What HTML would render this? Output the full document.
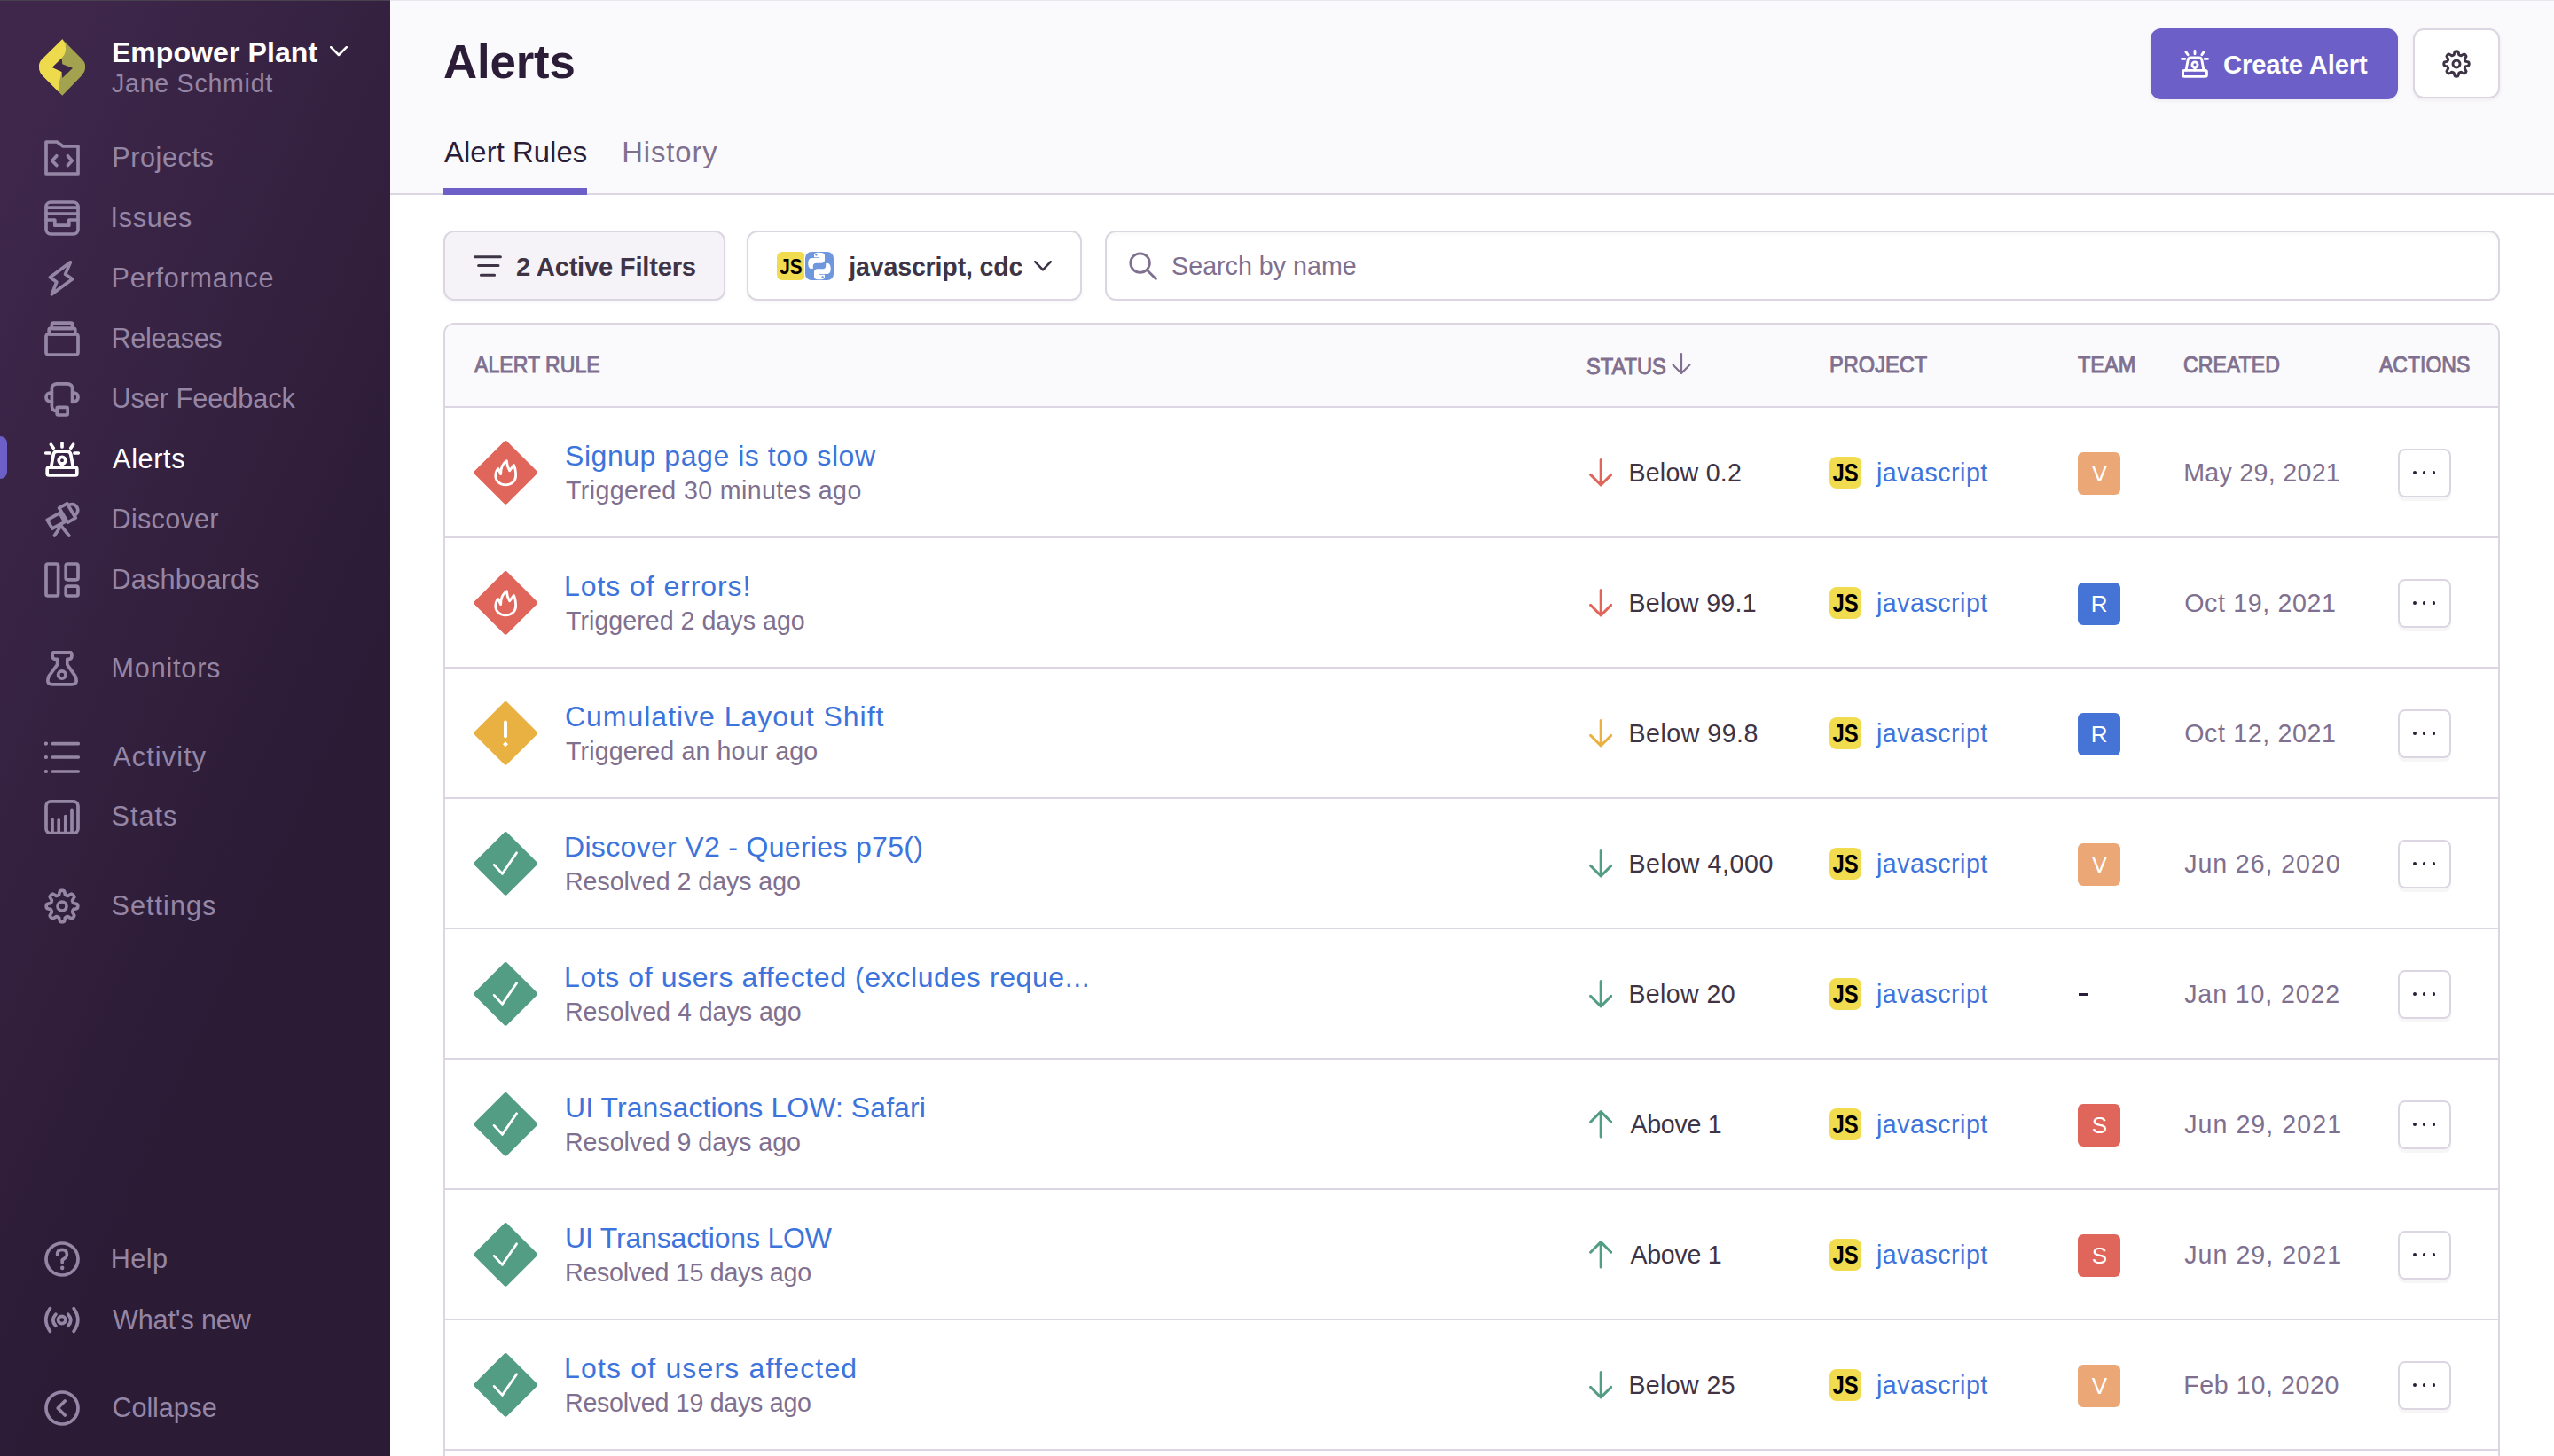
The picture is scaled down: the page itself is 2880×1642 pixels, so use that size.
<!DOCTYPE html>
<html><head><meta charset="utf-8">
<style>
*{box-sizing:border-box;margin:0;padding:0}
html,body{width:1440px;height:821px;overflow:hidden;background:#fff}
@media (min-width:1800px){html{zoom:2}}
body{font-family:"Liberation Sans",sans-serif;position:relative}
.a{position:absolute}
.t{position:absolute;white-space:nowrap}
#sb{position:absolute;left:0;top:0;width:220px;height:821px;background:linear-gradient(294.17deg,#2b1b35 35.57%,#3e274b 92.42%,#3e274b 92.42%)}
.nic{fill:none;stroke-width:1.85;stroke-linecap:round;stroke-linejoin:round}
</style></head><body>
<div id="sb"></div>
<svg class="a" style="left:22px;top:22px" width="26.2" height="32" viewBox="0 0 26.2 32">
<path d="M13.14 0.11 L1.7 11.39 Q0 13.2 0 15.4 Q0 18.6 1.7 20.35 L13.14 31.94 L24.27 20.35 Q26.13 18.3 26.13 15.72 Q26.13 13.2 24.27 11.39 Z" fill="#a3a24e"/>
<path d="M13.14 0.11 L1.7 11.39 Q0 13.2 0 15.4 Q0 18.6 1.7 20.35 L13.14 31.94 L11.29 29.94 L11.13 25.92 L11.6 23.75 L12.83 18.5 L7.42 16.02 L12.83 10.77 L14.38 8.6 L15.06 6.13 L14.84 3.04 Z" fill="#eedb4d"/>
<path d="M12.83 10.77 L7.42 16.02 L12.83 18.5 L13.14 22.05 L19.02 16.33 L13.14 14.17 Z" fill="#3d2548"/>
</svg>
<svg class="a" style="left:186px;top:26.2px" width="10" height="5.8" viewBox="0 0 10 5.8"><path d="M0.6 0.6 L5 5 L9.4 0.6" fill="none" stroke="#fff" stroke-width="1.3" stroke-linecap="round" stroke-linejoin="round"/></svg>
<svg class="a nic" style="left:25px;top:79.00px;stroke:#9586a5" width="20" height="20" viewBox="0 0 20 20"><path d="M1 1 H7.1 L10.6 3.5 H19 V19 H1 Z"/><path d="M6.9 8.9 L4.4 11.6 L6.9 14.3 M13.2 8.9 L15.6 11.6 L13.2 14.3"/></svg>
<svg class="a nic" style="left:25px;top:113.00px;stroke:#9586a5" width="20" height="20" viewBox="0 0 20 20"><rect x="1" y="1" width="18" height="18" rx="2.6"/><path d="M1 4.1 H19 M1 7.5 H19 M1 11 H5.9 V14.1 H13.9 V11 H19"/></svg>
<svg class="a nic" style="left:25px;top:147.00px;stroke:#9586a5" width="20" height="20" viewBox="0 0 20 20"><path d="M14.7 0.9 L3.2 9.4 L6.9 12 L4.2 18.9 L15.8 10.4 L11.8 7.6 Z"/></svg>
<svg class="a nic" style="left:25px;top:181.00px;stroke:#9586a5" width="20" height="20" viewBox="0 0 20 20"><rect x="1" y="7.4" width="18" height="11.6" rx="1.2"/><rect x="2.6" y="4.2" width="14.8" height="3.2" rx="0.8"/><rect x="4.2" y="1.1" width="11.6" height="3.1" rx="0.8"/></svg>
<svg class="a nic" style="left:25px;top:215.25px;stroke:#9586a5" width="20" height="20" viewBox="0 0 20 20"><path d="M4.2 11 V4 Q4.2 0.9 7.3 0.9 H12.7 Q15.8 0.9 15.8 4 V11.2"/><path d="M4.2 5.9 Q1 5.9 1 8.45 Q1 11 4.2 11 M15.8 5.9 Q19 5.9 19 8.45 Q19 11 15.8 11"/><path d="M4.2 11 V13.4 Q4.2 16.3 7.1 16.3"/><rect x="7.1" y="14.2" width="6" height="4.3" rx="0.6"/></svg>
<svg class="a nic" style="left:25px;top:249.05px;stroke:#fff" width="20" height="20" viewBox="0 0 20 20"><path d="M10 0.9 V3 M3.7 1.6 L5.1 3.6 M16.3 1.6 L14.9 3.6 M0.9 6.5 H3 M17 6.5 H19.1"/><path d="M3.8 14.4 L5.1 7.3 Q5.4 5.6 7.2 5.6 H12.8 Q14.6 5.6 14.9 7.3 L16.2 14.4"/><circle cx="10" cy="10.6" r="1.9"/><path d="M10 12.5 V14.4"/><rect x="1.6" y="14.6" width="16.8" height="4.4" rx="1"/></svg>
<svg class="a nic" style="left:25px;top:283.05px;stroke:#9586a5" width="20" height="20" viewBox="0 0 20 20"><path d="M1.6 10.2 L8.6 6.3 L11.5 11.3 L4.5 15 Z"/><path d="M8.3 3.4 L12.8 0.9 L17.6 9 L13.2 11.6 Z"/><path d="M14 1.6 Q17.2 0.6 18.6 3.4 Q19.4 5.6 17.8 7"/><path d="M9.4 13.4 L5.7 19 M9.4 13.4 L13.9 19"/></svg>
<svg class="a nic" style="left:25px;top:317.15px;stroke:#9586a5" width="20" height="20" viewBox="0 0 20 20"><rect x="1" y="1" width="6.8" height="18" rx="1"/><rect x="12.1" y="1" width="6.9" height="8.9" rx="1"/><rect x="12.1" y="13.6" width="6.9" height="5.4" rx="1"/></svg>
<svg class="a nic" style="left:25px;top:367.00px;stroke:#9586a5" width="20" height="20" viewBox="0 0 20 20"><path d="M7.3 7.8 V4.7 H6.2 Q4.5 4.7 4.5 2.4 Q4.5 0.6 6.2 0.6 H13.8 Q15.5 0.6 15.5 2.4 Q15.5 4.7 13.8 4.7 H12.9 V7.8 L17.4 14.2 Q19.4 18.9 15.4 18.9 H4.6 Q0.6 18.9 2.6 14.2 Z"/><circle cx="9.9" cy="13.5" r="2.1"/></svg>
<svg class="a nic" style="left:25px;top:416.85px;stroke:#9586a5" width="20" height="20" viewBox="0 0 20 20"><path d="M4.6 2.3 H19.1 M4.6 10 H19.1 M4.6 18 H19.1"/><path d="M0.9 2.3 H1 M0.9 10 H1 M0.9 18 H1" stroke-width="2.1"/></svg>
<svg class="a nic" style="left:25px;top:450.70px;stroke:#9586a5" width="20" height="20" viewBox="0 0 20 20"><rect x="1" y="1.4" width="18" height="17.9" rx="2.6"/><path d="M4.5 19.3 V11.6 M8.1 19.3 V11.9 M11.9 19.3 V9.8 M15.5 19.3 V6.2"/></svg>
<svg class="a nic" style="left:25px;top:500.90px;stroke:#9586a5" width="20" height="20" viewBox="0 0 20 20"><circle cx="10" cy="10" r="2.5"/><path d="M10.0 1.1 10.6 1.2 11.1 1.4 11.5 2.4 11.7 3.5 12.1 3.8 12.5 4.0 12.9 4.1 13.3 4.2 14.3 3.6 15.3 3.1 15.8 3.3 16.3 3.7 16.7 4.2 16.9 4.7 16.4 5.7 15.8 6.7 15.9 7.1 16.0 7.5 16.2 7.9 16.5 8.3 17.6 8.5 18.6 8.9 18.8 9.4 18.9 10.0 18.8 10.6 18.6 11.1 17.6 11.5 16.5 11.7 16.2 12.1 16.0 12.5 15.9 12.9 15.8 13.3 16.4 14.3 16.9 15.3 16.7 15.8 16.3 16.3 15.8 16.7 15.3 16.9 14.3 16.4 13.3 15.8 12.9 15.9 12.5 16.0 12.1 16.2 11.7 16.5 11.5 17.6 11.1 18.6 10.6 18.8 10.0 18.9 9.4 18.8 8.9 18.6 8.5 17.6 8.3 16.5 7.9 16.2 7.5 16.0 7.1 15.9 6.7 15.8 5.7 16.4 4.7 16.9 4.2 16.7 3.7 16.3 3.3 15.8 3.1 15.3 3.6 14.3 4.2 13.3 4.1 12.9 4.0 12.5 3.8 12.1 3.5 11.7 2.4 11.5 1.4 11.1 1.2 10.6 1.1 10.0 1.2 9.4 1.4 8.9 2.4 8.5 3.5 8.3 3.8 7.9 4.0 7.5 4.1 7.1 4.2 6.7 3.6 5.7 3.1 4.7 3.3 4.2 3.7 3.7 4.2 3.3 4.7 3.1 5.7 3.6 6.7 4.2 7.1 4.1 7.5 4.0 7.9 3.8 8.3 3.5 8.5 2.4 8.9 1.4 9.4 1.2Z"/></svg>
<svg class="a nic" style="left:25px;top:700.10px;stroke:#9586a5" width="20" height="20" viewBox="0 0 20 20"><circle cx="10" cy="10" r="9"/><path d="M7.3 7.5 Q7.3 4.7 10 4.7 Q12.7 4.7 12.7 7.3 Q12.7 9.1 10.1 10.5 V11.9"/><path d="M10.1 14.9 V15" stroke-width="2.2"/></svg>
<svg class="a nic" style="left:25px;top:734.30px;stroke:#9586a5" width="20" height="20" viewBox="0 0 20 20"><circle cx="9.86" cy="9.75" r="2.1"/><path d="M6.4 6.6 Q3.4 9.85 6.4 13.1 M13.4 6.6 Q16.4 9.85 13.4 13.1 M3.2 3.3 Q-1.4 9.75 3.2 16.2 M16.6 3.3 Q21.2 9.75 16.6 16.2"/></svg>
<svg class="a nic" style="left:25px;top:784.15px;stroke:#9586a5" width="20" height="20" viewBox="0 0 20 20"><circle cx="10" cy="10" r="9"/><path d="M11.6 6 L7.6 10 L11.6 14"/></svg>
<div class="a" style="left:0;top:246px;width:4px;height:24px;background:#6c5fc7;border-radius:0 4px 4px 0"></div>
<div class="a" style="left:220px;top:0;width:1220px;height:110px;background:#faf9fb;border-bottom:1px solid #dbd6e1"></div>
<div class="a" style="left:250px;top:106px;width:81px;height:4px;background:#6c5fc7"></div>
<div class="a" style="left:1212.6px;top:16px;width:139.4px;height:40px;background:#6c5fc7;border-radius:6px;box-shadow:0 1px 2px rgba(43,34,51,0.06)"></div>
<svg class="a nic" style="left:1229.5px;top:28px;stroke:#fff;stroke-width:1.8" width="16" height="16" viewBox="0 0 20 20"><path d="M10 0.9 V3 M3.7 1.6 L5.1 3.6 M16.3 1.6 L14.9 3.6 M0.9 6.5 H3 M17 6.5 H19.1"/><path d="M3.8 14.4 L5.1 7.3 Q5.4 5.6 7.2 5.6 H12.8 Q14.6 5.6 14.9 7.3 L16.2 14.4"/><circle cx="10" cy="10.6" r="1.9"/><path d="M10 12.5 V14.4"/><rect x="1.6" y="14.6" width="16.8" height="4.4" rx="1"/></svg>
<div class="a" style="left:1360.3px;top:16.2px;width:49.2px;height:39.5px;background:#fff;border:1px solid #dbd6e1;border-radius:6px;box-shadow:0 1px 2px rgba(43,34,51,0.06)"></div>
<svg class="a nic" style="left:1377px;top:28px;stroke:#3e3446;stroke-width:1.85" width="16" height="16" viewBox="0 0 20 20"><circle cx="10" cy="10" r="2.5"/><path d="M10.0 1.1 10.6 1.2 11.1 1.4 11.5 2.4 11.7 3.5 12.1 3.8 12.5 4.0 12.9 4.1 13.3 4.2 14.3 3.6 15.3 3.1 15.8 3.3 16.3 3.7 16.7 4.2 16.9 4.7 16.4 5.7 15.8 6.7 15.9 7.1 16.0 7.5 16.2 7.9 16.5 8.3 17.6 8.5 18.6 8.9 18.8 9.4 18.9 10.0 18.8 10.6 18.6 11.1 17.6 11.5 16.5 11.7 16.2 12.1 16.0 12.5 15.9 12.9 15.8 13.3 16.4 14.3 16.9 15.3 16.7 15.8 16.3 16.3 15.8 16.7 15.3 16.9 14.3 16.4 13.3 15.8 12.9 15.9 12.5 16.0 12.1 16.2 11.7 16.5 11.5 17.6 11.1 18.6 10.6 18.8 10.0 18.9 9.4 18.8 8.9 18.6 8.5 17.6 8.3 16.5 7.9 16.2 7.5 16.0 7.1 15.9 6.7 15.8 5.7 16.4 4.7 16.9 4.2 16.7 3.7 16.3 3.3 15.8 3.1 15.3 3.6 14.3 4.2 13.3 4.1 12.9 4.0 12.5 3.8 12.1 3.5 11.7 2.4 11.5 1.4 11.1 1.2 10.6 1.1 10.0 1.2 9.4 1.4 8.9 2.4 8.5 3.5 8.3 3.8 7.9 4.0 7.5 4.1 7.1 4.2 6.7 3.6 5.7 3.1 4.7 3.3 4.2 3.7 3.7 4.2 3.3 4.7 3.1 5.7 3.6 6.7 4.2 7.1 4.1 7.5 4.0 7.9 3.8 8.3 3.5 8.5 2.4 8.9 1.4 9.4 1.2Z"/></svg>
<div class="a" style="left:250px;top:130px;width:159px;height:39.6px;background:#f5f3f7;border:1px solid #dbd6e1;border-radius:6px;box-shadow:0 1px 2px rgba(43,34,51,0.04)"></div>
<svg class="a" style="left:267px;top:143px" width="16" height="14" viewBox="0 0 16 14" fill="none" stroke="#3e3446" stroke-width="1.5" stroke-linecap="round"><path d="M0.8 1.9 H15.2 M2.8 6.8 H14 M4.2 12.1 H11.8"/></svg>
<div class="a" style="left:421.2px;top:130px;width:188.7px;height:39.6px;background:#fff;border:1px solid #dbd6e1;border-radius:6px;box-shadow:0 1px 2px rgba(43,34,51,0.04)"></div>
<div class="a" style="left:438px;top:142px;width:16px;height:16px;background:#f0dc4e;border-radius:3px"></div>
<svg class="a" style="left:438px;top:142px" width="16" height="16" viewBox="0 0 16 16"><text x="1.65" y="12.35" font-family="Liberation Sans" font-weight="700" font-size="11.8" textLength="12.7" lengthAdjust="spacingAndGlyphs" fill="#000">JS</text></svg>
<div class="a" style="left:454px;top:142px;width:16px;height:16px;background:#6f97dd;border-radius:3.5px;box-shadow:0 0 0 0.6px #fff"></div>
<svg class="a" style="left:454px;top:142px" width="16" height="16" viewBox="0 0 16 16" fill="#fff" fill-rule="evenodd"><g transform="translate(8 8) scale(1.2) translate(-8 -8)"><path d="M7.9 1.6 C5.3 1.6 5.5 2.7 5.5 2.7 V3.9 H8 V4.3 H4.4 C4.4 4.3 2.7 4.1 2.7 6.8 C2.7 9.4 4.2 9.3 4.2 9.3 H5 V8.1 C5 8.1 4.9 6.6 6.5 6.6 H9 C9 6.6 10.5 6.6 10.5 5.1 V2.9 C10.5 2.9 10.7 1.6 7.9 1.6 Z M6.5 2.3 C6.8 2.3 7 2.5 7 2.8 C7 3.1 6.8 3.3 6.5 3.3 C6.2 3.3 6 3.1 6 2.8 C6 2.5 6.2 2.3 6.5 2.3 Z"/><path d="M8.1 14.4 C10.7 14.4 10.5 13.3 10.5 13.3 V12.1 H8 V11.7 H11.6 C11.6 11.7 13.3 11.9 13.3 9.2 C13.3 6.6 11.8 6.7 11.8 6.7 H11 V7.9 C11 7.9 11.1 9.4 9.5 9.4 H7 C7 9.4 5.5 9.4 5.5 10.9 V13.1 C5.5 13.1 5.3 14.4 8.1 14.4 Z M9.5 13.7 C9.2 13.7 9 13.5 9 13.2 C9 12.9 9.2 12.7 9.5 12.7 C9.8 12.7 10 12.9 10 13.2 C10 13.5 9.8 13.7 9.5 13.7 Z"/></g></svg>
<svg class="a" style="left:582.8px;top:147px" width="10" height="6" viewBox="0 0 10 6"><path d="M0.6 0.6 L5 5.2 L9.4 0.6" fill="none" stroke="#3e3446" stroke-width="1.3" stroke-linecap="round" stroke-linejoin="round"/></svg>
<div class="a" style="left:622.8px;top:130px;width:786.7px;height:39.6px;background:#fff;border:1px solid #dbd6e1;border-radius:6px;box-shadow:inset 0 1px 2px rgba(43,34,51,0.03)"></div>
<svg class="a" style="left:636.5px;top:142px" width="16" height="16" viewBox="0 0 16 16" fill="none" stroke="#80708f" stroke-width="1.4" stroke-linecap="round"><circle cx="6.3" cy="6.3" r="5.4"/><path d="M10.2 10.2 L15.2 15.2"/></svg>
<div class="a" style="left:250px;top:182px;width:1159.5px;height:700px;background:#fff;border:1px solid #dbd6e1;border-radius:6px"></div>
<div class="a" style="left:251px;top:183px;width:1157.5px;height:46px;background:#faf9fb;border-radius:5px 5px 0 0"></div>
<div class="a" style="left:251px;top:229.0px;width:1157.5px;height:1px;background:#dbd6e1"></div>
<div class="a" style="left:251px;top:302.5px;width:1157.5px;height:1px;background:#dbd6e1"></div>
<div class="a" style="left:251px;top:376.0px;width:1157.5px;height:1px;background:#dbd6e1"></div>
<div class="a" style="left:251px;top:449.5px;width:1157.5px;height:1px;background:#dbd6e1"></div>
<div class="a" style="left:251px;top:523.0px;width:1157.5px;height:1px;background:#dbd6e1"></div>
<div class="a" style="left:251px;top:596.5px;width:1157.5px;height:1px;background:#dbd6e1"></div>
<div class="a" style="left:251px;top:670.0px;width:1157.5px;height:1px;background:#dbd6e1"></div>
<div class="a" style="left:251px;top:743.5px;width:1157.5px;height:1px;background:#dbd6e1"></div>
<div class="a" style="left:251px;top:817.0px;width:1157.5px;height:1px;background:#dbd6e1"></div>
<svg class="a" style="left:942.5px;top:199px" width="11" height="12.2" viewBox="0 0 11 12.2" fill="none" stroke="#80708f" stroke-width="1.1" stroke-linecap="round" stroke-linejoin="round"><path d="M5.5 0.6 V11.4 M0.8 6.8 L5.5 11.5 L10.2 6.8"/></svg>
<div class="a" style="left:271.9px;top:253.4px;width:26.2px;height:26.2px;background:#e0655a;border-radius:1.3px;transform:rotate(45deg)"></div>
<svg class="a" style="left:277px;top:256.5px" width="16" height="20" viewBox="-8 -10 16 20" fill="none" stroke="#fff" stroke-width="1.4" stroke-linejoin="round" stroke-linecap="round"><path d="M0.1 6.9 C-3.5 6.9 -5.6 4.6 -5.6 1.8 C-5.6 -0.2 -4.8 -1.6 -4.1 -2.3 L-2.7 0.8 C-2.6 -2.8 -1.5 -5.4 0.7 -6.7 C0.8 -4.3 1.3 -2.8 2.3 -1.1 L4.7 -4.3 C5.4 -2.9 5.8 -1.0 5.8 1.6 C5.8 4.6 3.6 6.9 0.1 6.9 Z"/></svg>
<svg class="a" style="left:895.9px;top:258.7px" width="13.2" height="15.8" viewBox="0 0 13.2 15.8" fill="none" stroke="#e0655a" stroke-width="1.5" stroke-linecap="round" stroke-linejoin="round"><path d="M6.6 0.8 V15 M0.8 9.2 L6.6 15 L12.4 9.2"/></svg>
<div class="a" style="left:1031.5px;top:257.5px;width:18px;height:18px;background:#f0dc4e;border-radius:4px"></div>
<svg class="a" style="left:1031.5px;top:257.5px" width="18" height="18" viewBox="0 0 18 18"><text x="1.75" y="13.9" font-family="Liberation Sans" font-weight="700" font-size="14.8" textLength="14.6" lengthAdjust="spacingAndGlyphs" fill="#000">JS</text></svg>
<div class="a" style="left:1171.5px;top:255.0px;width:24px;height:24px;background:#eba776;border-radius:3px"></div>
<div class="a" style="left:1352px;top:252.8px;width:30px;height:27.6px;background:#fff;border:1px solid #dbd6e1;border-radius:4px;box-shadow:0 2px 0 rgba(43,34,51,0.04)"></div>
<div class="a" style="left:1360.4px;top:265.7px;width:1.9px;height:1.9px;background:#2b1d38;border-radius:1px"></div>
<div class="a" style="left:1365.8500000000001px;top:265.7px;width:1.9px;height:1.9px;background:#2b1d38;border-radius:1px"></div>
<div class="a" style="left:1371.3000000000002px;top:265.7px;width:1.9px;height:1.9px;background:#2b1d38;border-radius:1px"></div>
<div class="a" style="left:271.9px;top:326.9px;width:26.2px;height:26.2px;background:#e0655a;border-radius:1.3px;transform:rotate(45deg)"></div>
<svg class="a" style="left:277px;top:330.0px" width="16" height="20" viewBox="-8 -10 16 20" fill="none" stroke="#fff" stroke-width="1.4" stroke-linejoin="round" stroke-linecap="round"><path d="M0.1 6.9 C-3.5 6.9 -5.6 4.6 -5.6 1.8 C-5.6 -0.2 -4.8 -1.6 -4.1 -2.3 L-2.7 0.8 C-2.6 -2.8 -1.5 -5.4 0.7 -6.7 C0.8 -4.3 1.3 -2.8 2.3 -1.1 L4.7 -4.3 C5.4 -2.9 5.8 -1.0 5.8 1.6 C5.8 4.6 3.6 6.9 0.1 6.9 Z"/></svg>
<svg class="a" style="left:895.9px;top:332.2px" width="13.2" height="15.8" viewBox="0 0 13.2 15.8" fill="none" stroke="#e0655a" stroke-width="1.5" stroke-linecap="round" stroke-linejoin="round"><path d="M6.6 0.8 V15 M0.8 9.2 L6.6 15 L12.4 9.2"/></svg>
<div class="a" style="left:1031.5px;top:331.0px;width:18px;height:18px;background:#f0dc4e;border-radius:4px"></div>
<svg class="a" style="left:1031.5px;top:331.0px" width="18" height="18" viewBox="0 0 18 18"><text x="1.75" y="13.9" font-family="Liberation Sans" font-weight="700" font-size="14.8" textLength="14.6" lengthAdjust="spacingAndGlyphs" fill="#000">JS</text></svg>
<div class="a" style="left:1171.5px;top:328.5px;width:24px;height:24px;background:#4674d6;border-radius:3px"></div>
<div class="a" style="left:1352px;top:326.3px;width:30px;height:27.6px;background:#fff;border:1px solid #dbd6e1;border-radius:4px;box-shadow:0 2px 0 rgba(43,34,51,0.04)"></div>
<div class="a" style="left:1360.4px;top:339.2px;width:1.9px;height:1.9px;background:#2b1d38;border-radius:1px"></div>
<div class="a" style="left:1365.8500000000001px;top:339.2px;width:1.9px;height:1.9px;background:#2b1d38;border-radius:1px"></div>
<div class="a" style="left:1371.3000000000002px;top:339.2px;width:1.9px;height:1.9px;background:#2b1d38;border-radius:1px"></div>
<div class="a" style="left:271.9px;top:400.4px;width:26.2px;height:26.2px;background:#e9b141;border-radius:1.3px;transform:rotate(45deg)"></div>
<svg class="a" style="left:277px;top:403.5px" width="16" height="20" viewBox="-8 -10 16 20" fill="#fff"><rect x="-1" y="-7.3" width="2" height="9.9" rx="1"/><rect x="-1.05" y="5.1" width="2.1" height="2.1" transform="rotate(45 0 6.15)"/></svg>
<svg class="a" style="left:895.9px;top:405.7px" width="13.2" height="15.8" viewBox="0 0 13.2 15.8" fill="none" stroke="#e9b141" stroke-width="1.5" stroke-linecap="round" stroke-linejoin="round"><path d="M6.6 0.8 V15 M0.8 9.2 L6.6 15 L12.4 9.2"/></svg>
<div class="a" style="left:1031.5px;top:404.5px;width:18px;height:18px;background:#f0dc4e;border-radius:4px"></div>
<svg class="a" style="left:1031.5px;top:404.5px" width="18" height="18" viewBox="0 0 18 18"><text x="1.75" y="13.9" font-family="Liberation Sans" font-weight="700" font-size="14.8" textLength="14.6" lengthAdjust="spacingAndGlyphs" fill="#000">JS</text></svg>
<div class="a" style="left:1171.5px;top:402.0px;width:24px;height:24px;background:#4674d6;border-radius:3px"></div>
<div class="a" style="left:1352px;top:399.8px;width:30px;height:27.6px;background:#fff;border:1px solid #dbd6e1;border-radius:4px;box-shadow:0 2px 0 rgba(43,34,51,0.04)"></div>
<div class="a" style="left:1360.4px;top:412.7px;width:1.9px;height:1.9px;background:#2b1d38;border-radius:1px"></div>
<div class="a" style="left:1365.8500000000001px;top:412.7px;width:1.9px;height:1.9px;background:#2b1d38;border-radius:1px"></div>
<div class="a" style="left:1371.3000000000002px;top:412.7px;width:1.9px;height:1.9px;background:#2b1d38;border-radius:1px"></div>
<div class="a" style="left:271.9px;top:473.9px;width:26.2px;height:26.2px;background:#529d83;border-radius:1.3px;transform:rotate(45deg)"></div>
<svg class="a" style="left:277px;top:477.0px" width="16" height="20" viewBox="-8 -10 16 20" fill="none" stroke="#fff" stroke-width="1.4" stroke-linecap="round" stroke-linejoin="round"><path d="M-6.4 0.7 L-1.8 5.7 L6.3 -6.1"/></svg>
<svg class="a" style="left:895.9px;top:479.2px" width="13.2" height="15.8" viewBox="0 0 13.2 15.8" fill="none" stroke="#529d83" stroke-width="1.5" stroke-linecap="round" stroke-linejoin="round"><path d="M6.6 0.8 V15 M0.8 9.2 L6.6 15 L12.4 9.2"/></svg>
<div class="a" style="left:1031.5px;top:478.0px;width:18px;height:18px;background:#f0dc4e;border-radius:4px"></div>
<svg class="a" style="left:1031.5px;top:478.0px" width="18" height="18" viewBox="0 0 18 18"><text x="1.75" y="13.9" font-family="Liberation Sans" font-weight="700" font-size="14.8" textLength="14.6" lengthAdjust="spacingAndGlyphs" fill="#000">JS</text></svg>
<div class="a" style="left:1171.5px;top:475.5px;width:24px;height:24px;background:#eba776;border-radius:3px"></div>
<div class="a" style="left:1352px;top:473.3px;width:30px;height:27.6px;background:#fff;border:1px solid #dbd6e1;border-radius:4px;box-shadow:0 2px 0 rgba(43,34,51,0.04)"></div>
<div class="a" style="left:1360.4px;top:486.2px;width:1.9px;height:1.9px;background:#2b1d38;border-radius:1px"></div>
<div class="a" style="left:1365.8500000000001px;top:486.2px;width:1.9px;height:1.9px;background:#2b1d38;border-radius:1px"></div>
<div class="a" style="left:1371.3000000000002px;top:486.2px;width:1.9px;height:1.9px;background:#2b1d38;border-radius:1px"></div>
<div class="a" style="left:271.9px;top:547.4px;width:26.2px;height:26.2px;background:#529d83;border-radius:1.3px;transform:rotate(45deg)"></div>
<svg class="a" style="left:277px;top:550.5px" width="16" height="20" viewBox="-8 -10 16 20" fill="none" stroke="#fff" stroke-width="1.4" stroke-linecap="round" stroke-linejoin="round"><path d="M-6.4 0.7 L-1.8 5.7 L6.3 -6.1"/></svg>
<svg class="a" style="left:895.9px;top:552.7px" width="13.2" height="15.8" viewBox="0 0 13.2 15.8" fill="none" stroke="#529d83" stroke-width="1.5" stroke-linecap="round" stroke-linejoin="round"><path d="M6.6 0.8 V15 M0.8 9.2 L6.6 15 L12.4 9.2"/></svg>
<div class="a" style="left:1031.5px;top:551.5px;width:18px;height:18px;background:#f0dc4e;border-radius:4px"></div>
<svg class="a" style="left:1031.5px;top:551.5px" width="18" height="18" viewBox="0 0 18 18"><text x="1.75" y="13.9" font-family="Liberation Sans" font-weight="700" font-size="14.8" textLength="14.6" lengthAdjust="spacingAndGlyphs" fill="#000">JS</text></svg>
<div class="a" style="left:1172px;top:559.9px;width:5px;height:1.4px;background:#2b1d38"></div>
<div class="a" style="left:1352px;top:546.8px;width:30px;height:27.6px;background:#fff;border:1px solid #dbd6e1;border-radius:4px;box-shadow:0 2px 0 rgba(43,34,51,0.04)"></div>
<div class="a" style="left:1360.4px;top:559.7px;width:1.9px;height:1.9px;background:#2b1d38;border-radius:1px"></div>
<div class="a" style="left:1365.8500000000001px;top:559.7px;width:1.9px;height:1.9px;background:#2b1d38;border-radius:1px"></div>
<div class="a" style="left:1371.3000000000002px;top:559.7px;width:1.9px;height:1.9px;background:#2b1d38;border-radius:1px"></div>
<div class="a" style="left:271.9px;top:620.9px;width:26.2px;height:26.2px;background:#529d83;border-radius:1.3px;transform:rotate(45deg)"></div>
<svg class="a" style="left:277px;top:624.0px" width="16" height="20" viewBox="-8 -10 16 20" fill="none" stroke="#fff" stroke-width="1.4" stroke-linecap="round" stroke-linejoin="round"><path d="M-6.4 0.7 L-1.8 5.7 L6.3 -6.1"/></svg>
<svg class="a" style="left:895.9px;top:626.2px" width="13.2" height="15.8" viewBox="0 0 13.2 15.8" fill="none" stroke="#529d83" stroke-width="1.5" stroke-linecap="round" stroke-linejoin="round"><path d="M6.6 15 V0.8 M0.8 6.6 L6.6 0.8 L12.4 6.6"/></svg>
<div class="a" style="left:1031.5px;top:625.0px;width:18px;height:18px;background:#f0dc4e;border-radius:4px"></div>
<svg class="a" style="left:1031.5px;top:625.0px" width="18" height="18" viewBox="0 0 18 18"><text x="1.75" y="13.9" font-family="Liberation Sans" font-weight="700" font-size="14.8" textLength="14.6" lengthAdjust="spacingAndGlyphs" fill="#000">JS</text></svg>
<div class="a" style="left:1171.5px;top:622.5px;width:24px;height:24px;background:#e0655a;border-radius:3px"></div>
<div class="a" style="left:1352px;top:620.3px;width:30px;height:27.6px;background:#fff;border:1px solid #dbd6e1;border-radius:4px;box-shadow:0 2px 0 rgba(43,34,51,0.04)"></div>
<div class="a" style="left:1360.4px;top:633.2px;width:1.9px;height:1.9px;background:#2b1d38;border-radius:1px"></div>
<div class="a" style="left:1365.8500000000001px;top:633.2px;width:1.9px;height:1.9px;background:#2b1d38;border-radius:1px"></div>
<div class="a" style="left:1371.3000000000002px;top:633.2px;width:1.9px;height:1.9px;background:#2b1d38;border-radius:1px"></div>
<div class="a" style="left:271.9px;top:694.4px;width:26.2px;height:26.2px;background:#529d83;border-radius:1.3px;transform:rotate(45deg)"></div>
<svg class="a" style="left:277px;top:697.5px" width="16" height="20" viewBox="-8 -10 16 20" fill="none" stroke="#fff" stroke-width="1.4" stroke-linecap="round" stroke-linejoin="round"><path d="M-6.4 0.7 L-1.8 5.7 L6.3 -6.1"/></svg>
<svg class="a" style="left:895.9px;top:699.7px" width="13.2" height="15.8" viewBox="0 0 13.2 15.8" fill="none" stroke="#529d83" stroke-width="1.5" stroke-linecap="round" stroke-linejoin="round"><path d="M6.6 15 V0.8 M0.8 6.6 L6.6 0.8 L12.4 6.6"/></svg>
<div class="a" style="left:1031.5px;top:698.5px;width:18px;height:18px;background:#f0dc4e;border-radius:4px"></div>
<svg class="a" style="left:1031.5px;top:698.5px" width="18" height="18" viewBox="0 0 18 18"><text x="1.75" y="13.9" font-family="Liberation Sans" font-weight="700" font-size="14.8" textLength="14.6" lengthAdjust="spacingAndGlyphs" fill="#000">JS</text></svg>
<div class="a" style="left:1171.5px;top:696.0px;width:24px;height:24px;background:#e0655a;border-radius:3px"></div>
<div class="a" style="left:1352px;top:693.8px;width:30px;height:27.6px;background:#fff;border:1px solid #dbd6e1;border-radius:4px;box-shadow:0 2px 0 rgba(43,34,51,0.04)"></div>
<div class="a" style="left:1360.4px;top:706.7px;width:1.9px;height:1.9px;background:#2b1d38;border-radius:1px"></div>
<div class="a" style="left:1365.8500000000001px;top:706.7px;width:1.9px;height:1.9px;background:#2b1d38;border-radius:1px"></div>
<div class="a" style="left:1371.3000000000002px;top:706.7px;width:1.9px;height:1.9px;background:#2b1d38;border-radius:1px"></div>
<div class="a" style="left:271.9px;top:767.9px;width:26.2px;height:26.2px;background:#529d83;border-radius:1.3px;transform:rotate(45deg)"></div>
<svg class="a" style="left:277px;top:771.0px" width="16" height="20" viewBox="-8 -10 16 20" fill="none" stroke="#fff" stroke-width="1.4" stroke-linecap="round" stroke-linejoin="round"><path d="M-6.4 0.7 L-1.8 5.7 L6.3 -6.1"/></svg>
<svg class="a" style="left:895.9px;top:773.2px" width="13.2" height="15.8" viewBox="0 0 13.2 15.8" fill="none" stroke="#529d83" stroke-width="1.5" stroke-linecap="round" stroke-linejoin="round"><path d="M6.6 0.8 V15 M0.8 9.2 L6.6 15 L12.4 9.2"/></svg>
<div class="a" style="left:1031.5px;top:772.0px;width:18px;height:18px;background:#f0dc4e;border-radius:4px"></div>
<svg class="a" style="left:1031.5px;top:772.0px" width="18" height="18" viewBox="0 0 18 18"><text x="1.75" y="13.9" font-family="Liberation Sans" font-weight="700" font-size="14.8" textLength="14.6" lengthAdjust="spacingAndGlyphs" fill="#000">JS</text></svg>
<div class="a" style="left:1171.5px;top:769.5px;width:24px;height:24px;background:#eba776;border-radius:3px"></div>
<div class="a" style="left:1352px;top:767.3px;width:30px;height:27.6px;background:#fff;border:1px solid #dbd6e1;border-radius:4px;box-shadow:0 2px 0 rgba(43,34,51,0.04)"></div>
<div class="a" style="left:1360.4px;top:780.2px;width:1.9px;height:1.9px;background:#2b1d38;border-radius:1px"></div>
<div class="a" style="left:1365.8500000000001px;top:780.2px;width:1.9px;height:1.9px;background:#2b1d38;border-radius:1px"></div>
<div class="a" style="left:1371.3000000000002px;top:780.2px;width:1.9px;height:1.9px;background:#2b1d38;border-radius:1px"></div>
<div class="a" style="left:0;top:0;width:220px;height:0.5px;background:#48414e"></div>
<div class="a" style="left:220px;top:0;width:1220px;height:0.5px;background:#e9e7ec"></div>
<div class="t" style="left:62.95px;top:21.50px;font-size:16px;line-height:16px;font-weight:700;letter-spacing:0.042px;color:#fff">Empower Plant</div>
<div class="t" style="left:63.00px;top:39.95px;font-size:14.3px;line-height:14.3px;letter-spacing:0.364px;color:#9586a5">Jane Schmidt</div>
<div class="t" style="left:63.15px;top:80.95px;font-size:15.3px;line-height:15.3px;letter-spacing:0.286px;color:#9586a5">Projects</div>
<div class="t" style="left:62.25px;top:114.95px;font-size:15.3px;line-height:15.3px;letter-spacing:0.34px;color:#9586a5">Issues</div>
<div class="t" style="left:62.75px;top:148.94px;font-size:15.3px;line-height:15.3px;letter-spacing:0.39px;color:#9586a5">Performance</div>
<div class="t" style="left:62.75px;top:182.94px;font-size:15.3px;line-height:15.3px;letter-spacing:-0.171px;color:#9586a5">Releases</div>
<div class="t" style="left:62.75px;top:217.19px;font-size:15.3px;line-height:15.3px;letter-spacing:-0.008px;color:#9586a5">User Feedback</div>
<div class="t" style="left:63.55px;top:251.00px;font-size:15.3px;line-height:15.3px;letter-spacing:0.32px;color:#fff">Alerts</div>
<div class="t" style="left:62.75px;top:285.00px;font-size:15.3px;line-height:15.3px;letter-spacing:0.143px;color:#9586a5">Discover</div>
<div class="t" style="left:62.75px;top:319.10px;font-size:15.3px;line-height:15.3px;letter-spacing:0.111px;color:#9586a5">Dashboards</div>
<div class="t" style="left:62.80px;top:368.94px;font-size:15.3px;line-height:15.3px;letter-spacing:0.393px;color:#9586a5">Monitors</div>
<div class="t" style="left:63.60px;top:418.80px;font-size:15.3px;line-height:15.3px;letter-spacing:0.571px;color:#9586a5">Activity</div>
<div class="t" style="left:62.75px;top:452.64px;font-size:15.3px;line-height:15.3px;letter-spacing:0.5px;color:#9586a5">Stats</div>
<div class="t" style="left:62.75px;top:502.85px;font-size:15.3px;line-height:15.3px;letter-spacing:0.521px;color:#9586a5">Settings</div>
<div class="t" style="left:62.40px;top:702.04px;font-size:15.3px;line-height:15.3px;letter-spacing:0.233px;color:#9586a5">Help</div>
<div class="t" style="left:63.50px;top:736.25px;font-size:15.3px;line-height:15.3px;letter-spacing:-0.078px;color:#9586a5">What's new</div>
<div class="t" style="left:63.25px;top:786.10px;font-size:15.3px;line-height:15.3px;letter-spacing:-0.057px;color:#9586a5">Collapse</div>
<div class="t" style="left:250.00px;top:22.01px;font-size:26.4px;line-height:26.4px;font-weight:700;letter-spacing:-0.08px;color:#2b1d38">Alerts</div>
<div class="t" style="left:250.50px;top:78.11px;font-size:16.4px;line-height:16.4px;letter-spacing:0.04px;color:#2b1d38">Alert Rules</div>
<div class="t" style="left:350.65px;top:78.11px;font-size:16.4px;line-height:16.4px;letter-spacing:0.442px;color:#80708f">History</div>
<div class="t" style="left:1253.50px;top:29.34px;font-size:14.6px;line-height:14.6px;font-weight:700;letter-spacing:-0.077px;color:#fff">Create Alert</div>
<div class="t" style="left:291.00px;top:143.34px;font-size:14.6px;line-height:14.6px;font-weight:700;letter-spacing:-0.117px;color:#3e3446">2 Active Filters</div>
<div class="t" style="left:478.60px;top:143.34px;font-size:14.3px;line-height:14.3px;font-weight:700;letter-spacing:-0.086px;color:#3e3446">javascript, cdc</div>
<div class="t" style="left:660.55px;top:142.84px;font-size:14.3px;line-height:14.3px;letter-spacing:0.015px;color:#80708f">Search by name</div>
<div class="t" style="left:267.30px;top:199.68px;font-size:12.5px;line-height:12.5px;-webkit-text-stroke:0.45px #80708f;letter-spacing:0px;transform:scaleX(0.9242);transform-origin:0 0;color:#80708f">ALERT RULE</div>
<div class="t" style="left:894.38px;top:200.38px;font-size:12.5px;line-height:12.5px;-webkit-text-stroke:0.45px #80708f;letter-spacing:0px;transform:scaleX(0.9473);transform-origin:0 0;color:#80708f">STATUS</div>
<div class="t" style="left:1031.28px;top:199.62px;font-size:12.5px;line-height:12.5px;-webkit-text-stroke:0.45px #80708f;letter-spacing:0px;transform:scaleX(0.9448);transform-origin:0 0;color:#80708f">PROJECT</div>
<div class="t" style="left:1171.40px;top:199.62px;font-size:12.5px;line-height:12.5px;-webkit-text-stroke:0.45px #80708f;letter-spacing:0px;transform:scaleX(0.9412);transform-origin:0 0;color:#80708f">TEAM</div>
<div class="t" style="left:1231.04px;top:199.62px;font-size:12.5px;line-height:12.5px;-webkit-text-stroke:0.45px #80708f;letter-spacing:0px;transform:scaleX(0.9259);transform-origin:0 0;color:#80708f">CREATED</div>
<div class="t" style="left:1341.50px;top:199.62px;font-size:12.5px;line-height:12.5px;-webkit-text-stroke:0.45px #80708f;letter-spacing:0px;transform:scaleX(0.9207);transform-origin:0 0;color:#80708f">ACTIONS</div>
<div class="t" style="left:318.50px;top:248.90px;font-size:16px;line-height:16px;letter-spacing:0.273px;color:#3d74db">Signup page is too slow</div>
<div class="t" style="left:319.00px;top:269.35px;font-size:14.3px;line-height:14.3px;letter-spacing:0.185px;color:#80708f">Triggered 30 minutes ago</div>
<div class="t" style="left:918.20px;top:259.25px;font-size:14.3px;line-height:14.3px;letter-spacing:0.125px;color:#3e3446">Below 0.2</div>
<div class="t" style="left:1058.00px;top:259.25px;font-size:14.3px;line-height:14.3px;letter-spacing:0.25px;color:#3d74db">javascript</div>
<div class="t" style="left:1231.10px;top:259.39px;font-size:14.3px;line-height:14.3px;letter-spacing:0.15px;color:#80708f">May 29, 2021</div>
<div class="t" style="left:1179.35px;top:260.50px;font-size:13px;line-height:13px;letter-spacing:0px;color:#fff">V</div>
<div class="t" style="left:318.00px;top:322.40px;font-size:16px;line-height:16px;letter-spacing:0.464px;color:#3d74db">Lots of errors!</div>
<div class="t" style="left:319.00px;top:342.85px;font-size:14.3px;line-height:14.3px;letter-spacing:0.016px;color:#80708f">Triggered 2 days ago</div>
<div class="t" style="left:918.20px;top:332.75px;font-size:14.3px;line-height:14.3px;letter-spacing:0.161px;color:#3e3446">Below 99.1</div>
<div class="t" style="left:1058.00px;top:332.75px;font-size:14.3px;line-height:14.3px;letter-spacing:0.25px;color:#3d74db">javascript</div>
<div class="t" style="left:1231.60px;top:332.89px;font-size:14.3px;line-height:14.3px;letter-spacing:0.318px;color:#80708f">Oct 19, 2021</div>
<div class="t" style="left:1178.85px;top:334.00px;font-size:13px;line-height:13px;letter-spacing:0px;color:#fff">R</div>
<div class="t" style="left:318.50px;top:395.90px;font-size:16px;line-height:16px;letter-spacing:0.489px;color:#3d74db">Cumulative Layout Shift</div>
<div class="t" style="left:319.00px;top:416.35px;font-size:14.3px;line-height:14.3px;letter-spacing:0.058px;color:#80708f">Triggered an hour ago</div>
<div class="t" style="left:918.20px;top:406.25px;font-size:14.3px;line-height:14.3px;letter-spacing:0.256px;color:#3e3446">Below 99.8</div>
<div class="t" style="left:1058.00px;top:406.25px;font-size:14.3px;line-height:14.3px;letter-spacing:0.25px;color:#3d74db">javascript</div>
<div class="t" style="left:1231.60px;top:406.39px;font-size:14.3px;line-height:14.3px;letter-spacing:0.318px;color:#80708f">Oct 12, 2021</div>
<div class="t" style="left:1178.85px;top:407.50px;font-size:13px;line-height:13px;letter-spacing:0px;color:#fff">R</div>
<div class="t" style="left:318.00px;top:469.40px;font-size:16px;line-height:16px;letter-spacing:0.162px;color:#3d74db">Discover V2 - Queries p75()</div>
<div class="t" style="left:318.50px;top:489.85px;font-size:14.3px;line-height:14.3px;letter-spacing:-0.031px;color:#80708f">Resolved 2 days ago</div>
<div class="t" style="left:918.20px;top:479.75px;font-size:14.3px;line-height:14.3px;letter-spacing:0.28px;color:#3e3446">Below 4,000</div>
<div class="t" style="left:1058.00px;top:479.75px;font-size:14.3px;line-height:14.3px;letter-spacing:0.25px;color:#3d74db">javascript</div>
<div class="t" style="left:1231.60px;top:479.89px;font-size:14.3px;line-height:14.3px;letter-spacing:0.455px;color:#80708f">Jun 26, 2020</div>
<div class="t" style="left:1179.35px;top:481.00px;font-size:13px;line-height:13px;letter-spacing:0px;color:#fff">V</div>
<div class="t" style="left:318.00px;top:542.90px;font-size:16px;line-height:16px;letter-spacing:0.3px;color:#3d74db">Lots of users affected (excludes reque...</div>
<div class="t" style="left:318.50px;top:563.35px;font-size:14.3px;line-height:14.3px;letter-spacing:-0.014px;color:#80708f">Resolved 4 days ago</div>
<div class="t" style="left:918.20px;top:553.25px;font-size:14.3px;line-height:14.3px;letter-spacing:0.186px;color:#3e3446">Below 20</div>
<div class="t" style="left:1058.00px;top:553.25px;font-size:14.3px;line-height:14.3px;letter-spacing:0.25px;color:#3d74db">javascript</div>
<div class="t" style="left:1231.60px;top:553.39px;font-size:14.3px;line-height:14.3px;letter-spacing:0.441px;color:#80708f">Jan 10, 2022</div>
<div class="t" style="left:318.50px;top:616.40px;font-size:16px;line-height:16px;letter-spacing:0.037px;color:#3d74db">UI Transactions LOW: Safari</div>
<div class="t" style="left:318.50px;top:636.85px;font-size:14.3px;line-height:14.3px;letter-spacing:-0.031px;color:#80708f">Resolved 9 days ago</div>
<div class="t" style="left:919.20px;top:626.75px;font-size:14.3px;line-height:14.3px;letter-spacing:-0.142px;color:#3e3446">Above 1</div>
<div class="t" style="left:1058.00px;top:626.75px;font-size:14.3px;line-height:14.3px;letter-spacing:0.25px;color:#3d74db">javascript</div>
<div class="t" style="left:1231.60px;top:626.89px;font-size:14.3px;line-height:14.3px;letter-spacing:0.523px;color:#80708f">Jun 29, 2021</div>
<div class="t" style="left:1179.35px;top:628.00px;font-size:13px;line-height:13px;letter-spacing:0px;color:#fff">S</div>
<div class="t" style="left:318.50px;top:689.90px;font-size:16px;line-height:16px;letter-spacing:-0.086px;color:#3d74db">UI Transactions LOW</div>
<div class="t" style="left:318.50px;top:710.35px;font-size:14.3px;line-height:14.3px;letter-spacing:-0.129px;color:#80708f">Resolved 15 days ago</div>
<div class="t" style="left:919.20px;top:700.25px;font-size:14.3px;line-height:14.3px;letter-spacing:-0.142px;color:#3e3446">Above 1</div>
<div class="t" style="left:1058.00px;top:700.25px;font-size:14.3px;line-height:14.3px;letter-spacing:0.25px;color:#3d74db">javascript</div>
<div class="t" style="left:1231.60px;top:700.39px;font-size:14.3px;line-height:14.3px;letter-spacing:0.523px;color:#80708f">Jun 29, 2021</div>
<div class="t" style="left:1179.35px;top:701.50px;font-size:13px;line-height:13px;letter-spacing:0px;color:#fff">S</div>
<div class="t" style="left:318.00px;top:763.40px;font-size:16px;line-height:16px;letter-spacing:0.59px;color:#3d74db">Lots of users affected</div>
<div class="t" style="left:318.50px;top:783.85px;font-size:14.3px;line-height:14.3px;letter-spacing:-0.132px;color:#80708f">Resolved 19 days ago</div>
<div class="t" style="left:918.20px;top:773.75px;font-size:14.3px;line-height:14.3px;letter-spacing:0.186px;color:#3e3446">Below 25</div>
<div class="t" style="left:1058.00px;top:773.75px;font-size:14.3px;line-height:14.3px;letter-spacing:0.25px;color:#3d74db">javascript</div>
<div class="t" style="left:1231.10px;top:773.89px;font-size:14.3px;line-height:14.3px;letter-spacing:0.309px;color:#80708f">Feb 10, 2020</div>
<div class="t" style="left:1179.35px;top:775.00px;font-size:13px;line-height:13px;letter-spacing:0px;color:#fff">V</div>
</body></html>
